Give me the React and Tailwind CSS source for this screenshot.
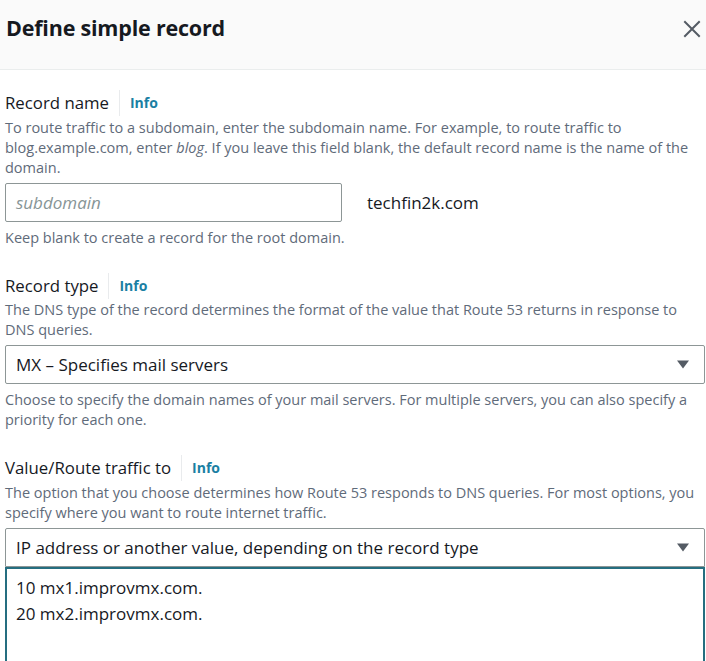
import React from "react";

function Info() {
  return (
    <div className="flex items-center h-[26px]">
      <div className="ml-[10px] w-px h-[26px] bg-[#e9ebed]" />
      <span className="ml-[10px] text-[14px] font-bold text-[#1a7fa3] leading-[20px]">Info</span>
    </div>
  );
}

function Label({ children }) {
  return (
    <div className="flex items-center h-[26px]">
      <span className="text-[16.8px] leading-[22px] text-[#16191f]">{children}</span>
      <Info />
    </div>
  );
}

function Caret() {
  return (
    <svg width="14" height="9" viewBox="0 0 14 9" className="shrink-0">
      <path d="M1 0.5 H13 L7 8.5 Z" fill="#545b64" />
    </svg>
  );
}

const desc = "text-[14.5px] leading-[20px] text-[#5f6b7a]";

export default function App() {
  return (
    <div className="w-[706px] h-[661px] overflow-hidden bg-white" style={{ fontFamily: '"Open Sans", "Noto Sans", sans-serif' }}>
      <div className="h-[70px] bg-[#fafafa] border-b border-[#eaeded] flex items-start justify-between pl-[6px] pr-[5px]">
        <h1 className="mt-[14px] text-[21.5px] leading-[28px] font-bold text-[#16191f] tracking-[-0.2px]">Define simple record</h1>
        <svg width="18" height="18" viewBox="0 0 18 18" className="mt-[20px]">
          <path d="M2 2 L16 16 M16 2 L2 16" stroke="#545b64" strokeWidth="2" strokeLinecap="square" />
        </svg>
      </div>

      <div className="pl-[5px] pr-px">
        {/* Record name */}
        <div className="pt-[20px]">
          <Label>Record name</Label>
          <p className={`mt-[2px] ${desc}`}>
            To route traffic to a subdomain, enter the subdomain name. For example, to route traffic to blog.example.com, enter <i>blog</i>. If you leave this field blank, the default record name is the name of the domain.
          </p>
          <div className="mt-[5px] flex items-center">
            <div className="w-[337px] h-[39px] border border-[#8d9696] rounded-[2px] flex items-center pl-[10px]">
              <span className="italic text-[17px] text-[#879596]">subdomain</span>
            </div>
            <span className="ml-[25px] text-[17px] text-[#16191f]">techfin2k.com</span>
          </div>
          <p className={`mt-[6px] ${desc}`}>Keep blank to create a record for the root domain.</p>
        </div>

        {/* Record type */}
        <div className="mt-[25px]">
          <Label>Record type</Label>
          <p className={`mt-px ${desc} pr-[10px]`}>
            The DNS type of the record determines the format of the value that Route 53 returns in response to DNS queries.
          </p>
          <div className="mt-[5px] h-[39px] border border-[#8d9696] rounded-[2px] flex items-center justify-between pl-[10px] pr-[14px]">
            <span className="text-[17px] text-[#16191f]">MX – Specifies mail servers</span>
            <Caret />
          </div>
          <p className={`mt-[6px] ${desc}`}>
            Choose to specify the domain names of your mail servers. For multiple servers, you can also specify a priority for each one.
          </p>
        </div>

        {/* Value */}
        <div className="mt-[25px]">
          <Label>Value/Route traffic to</Label>
          <p className={`mt-[2px] ${desc}`}>
            The option that you choose determines how Route 53 responds to DNS queries. For most options, you specify where you want to route internet traffic.
          </p>
          <div className="mt-[5px] h-[39px] border border-[#8d9696] rounded-t-[2px] flex items-center justify-between pl-[10px] pr-[14px]">
            <span className="text-[17px] text-[#16191f]">IP address or another value, depending on the record type</span>
            <Caret />
          </div>
          <div className="h-[120px] border-2 border-[#256e80] pl-[9px] pt-[6px]">
            <div className="text-[17px] leading-[26px] text-[#16191f]">10 mx1.improvmx.com.</div>
            <div className="text-[17px] leading-[26px] text-[#16191f]">20 mx2.improvmx.com.</div>
          </div>
        </div>
      </div>
    </div>
  );
}
